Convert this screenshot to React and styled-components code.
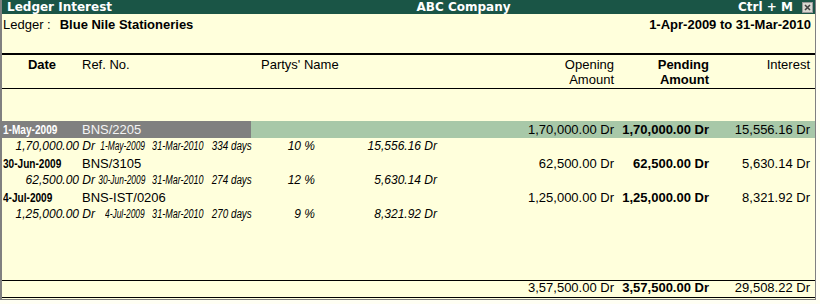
import React from 'react';
import styled, { createGlobalStyle } from 'styled-components';

const Global = createGlobalStyle`
  html, body { margin: 0; padding: 0; background: #fffff4; }
  body { font-family: "Liberation Sans", Arial, sans-serif; }
`;

const Panel = styled.div`
  width: 816px;
  height: 300px;
  box-sizing: border-box;
  border-left: 2px solid #808080;
  border-right: 1px solid #808080;
  border-bottom: 1px solid #808080;
  background: #ffffdc;
  display: flex;
  flex-direction: column;
  font-size: 13px;
  color: #000;
`;

const TitleBar = styled.div`
  height: 14px;
  flex: none;
  background: #1a5546;
  color: #fff;
  display: grid;
  grid-template-columns: 1fr 1fr;
  font-family: "DejaVu Sans", sans-serif;
  font-weight: bold;
  font-size: 12px;
  line-height: 14px;
  white-space: nowrap;
`;

const TitleLeft = styled.div`
  padding-left: 5px;
`;

const TitleRight = styled.div`
  display: flex;
  align-items: center;
  padding-left: 8px;
`;

const Spacer = styled.div`
  flex: 1;
`;

const CloseBox = styled.svg`
  display: block;
  margin: 0 2px 0 9px;
`;

const LedgerBar = styled.div`
  flex: none;
  display: flex;
  justify-content: space-between;
  padding: 3px 4px 21px 1px;
  line-height: 15px;
  border-bottom: 2px solid #000;
  white-space: nowrap;
`;

const Bold = styled.span`
  font-weight: bold;
  margin-left: ${(p) => p.$gap || 0}px;
`;

const cols = '80px 179px 259px 95px 95px 100px';

const HeaderRow = styled.div`
  flex: none;
  display: grid;
  grid-template-columns: ${cols};
  padding: 2px 0 1px;
  line-height: 15px;
  border-bottom: 1px solid #000;
`;

const Cell = styled.div`
  text-align: ${(p) => p.$align || 'left'};
  font-weight: ${(p) => (p.$bold ? 'bold' : 'normal')};
  padding-right: ${(p) => p.$pr || 0}px;
  padding-left: ${(p) => p.$pl || 0}px;
  color: ${(p) => p.$color || 'inherit'};
  white-space: nowrap;
`;

const Body = styled.div`
  flex: 1;
  padding-top: 32px;
`;

const MainRow = styled.div`
  display: grid;
  grid-template-columns: ${cols};
  height: 17px;
  line-height: 17px;
  background: ${(p) =>
    p.$selected
      ? 'linear-gradient(to right, #808080 0, #808080 249px, #a8c8a8 249px)'
      : 'transparent'};
`;

const Condensed = styled.span`
  display: inline-block;
  transform: scaleX(${(p) => p.$scale});
  transform-origin: ${(p) => p.$origin || 'left'} center;
  font-size: 12px;
  font-weight: ${(p) => (p.$bold ? 'bold' : 'inherit')};
`;

const DetailRow = styled.div`
  display: grid;
  grid-template-columns: 93px 50px 58px 49px 63px 122px;
  height: 17px;
  line-height: 17px;
  font-size: 12px;
  font-style: italic;
  white-space: nowrap;
`;

const DetailCell = styled.div`
  display: flex;
  justify-content: flex-end;
  min-width: 0;
`;

const TotalRow = styled.div`
  flex: none;
  display: grid;
  grid-template-columns: ${cols};
  height: 16px;
  line-height: 14px;
  border-top: 1px solid #000;
  border-bottom: 1px solid #000;
  margin-bottom: 1px;
`;

const entries = [
  {
    date: '1-May-2009',
    ref: 'BNS/2205',
    amt: '1,70,000.00 Dr',
    interest: '15,556.16 Dr',
    to: '31-Mar-2010',
    days: '334 days',
    pct: '10 %',
    selected: true,
  },
  {
    date: '30-Jun-2009',
    ref: 'BNS/3105',
    amt: '62,500.00 Dr',
    interest: '5,630.14 Dr',
    to: '31-Mar-2010',
    days: '274 days',
    pct: '12 %',
  },
  {
    date: '4-Jul-2009',
    ref: 'BNS-IST/0206',
    amt: '1,25,000.00 Dr',
    interest: '8,321.92 Dr',
    to: '31-Mar-2010',
    days: '270 days',
    pct: '9 %',
  },
];

function Entry({ e }) {
  const light = e.selected ? '#ffffff' : undefined;
  return (
    <>
      <MainRow $selected={e.selected}>
        <Cell $pl={1} $color={light}>
          <Condensed $scale={0.84} $bold>
            {e.date}
          </Condensed>
        </Cell>
        <Cell $color={e.selected ? '#f4f4f4' : undefined}>{e.ref}</Cell>
        <Cell />
        <Cell $align="right" $pr={1}>{e.amt}</Cell>
        <Cell $align="right" $pr={1} $bold>{e.amt}</Cell>
        <Cell $align="right">{e.interest}</Cell>
      </MainRow>
      <DetailRow>
        <DetailCell>{e.amt}</DetailCell>
        <DetailCell>
          <Condensed $scale={0.7} $origin="right">{e.date}</Condensed>
        </DetailCell>
        <DetailCell>
          <Condensed $scale={0.75} $origin="right">{e.to}</Condensed>
        </DetailCell>
        <DetailCell>
          <Condensed $scale={0.82} $origin="right">{e.days}</Condensed>
        </DetailCell>
        <DetailCell>{e.pct}</DetailCell>
        <DetailCell>{e.interest}</DetailCell>
      </DetailRow>
    </>
  );
}

export default function App() {
  return (
    <>
      <Global />
      <Panel>
        <TitleBar>
          <TitleLeft>Ledger Interest</TitleLeft>
          <TitleRight>
            <span>ABC Company</span>
            <Spacer />
            <span>Ctrl + M</span>
            <CloseBox width="11" height="11" viewBox="0 0 11 11">
              <rect x="0" y="0" width="11" height="11" fill="#d8d8d0" />
              <rect x="0.5" y="0.5" width="10" height="10" fill="none" stroke="#9a9a9a" />
              <path d="M3 3 L8 8 M8 3 L3 8" stroke="#404040" strokeWidth="1.6" />
            </CloseBox>
          </TitleRight>
        </TitleBar>
        <LedgerBar>
          <span>
            Ledger :<Bold $gap={9}>Blue Nile Stationeries</Bold>
          </span>
          <Bold>1-Apr-2009 to 31-Mar-2010</Bold>
        </LedgerBar>
        <HeaderRow>
          <Cell $align="center" $bold>Date</Cell>
          <Cell>Ref. No.</Cell>
          <Cell>Partys' Name</Cell>
          <Cell $align="right" $pr={1}>
            Opening
            <br />
            Amount
          </Cell>
          <Cell $align="right" $pr={1} $bold>
            Pending
            <br />
            Amount
          </Cell>
          <Cell $align="right">Interest</Cell>
        </HeaderRow>
        <Body>
          {entries.map((e) => (
            <Entry key={e.ref} e={e} />
          ))}
        </Body>
        <TotalRow>
          <Cell />
          <Cell />
          <Cell />
          <Cell $align="right" $pr={1}>3,57,500.00 Dr</Cell>
          <Cell $align="right" $pr={1} $bold>3,57,500.00 Dr</Cell>
          <Cell $align="right">29,508.22 Dr</Cell>
        </TotalRow>
      </Panel>
    </>
  );
}
